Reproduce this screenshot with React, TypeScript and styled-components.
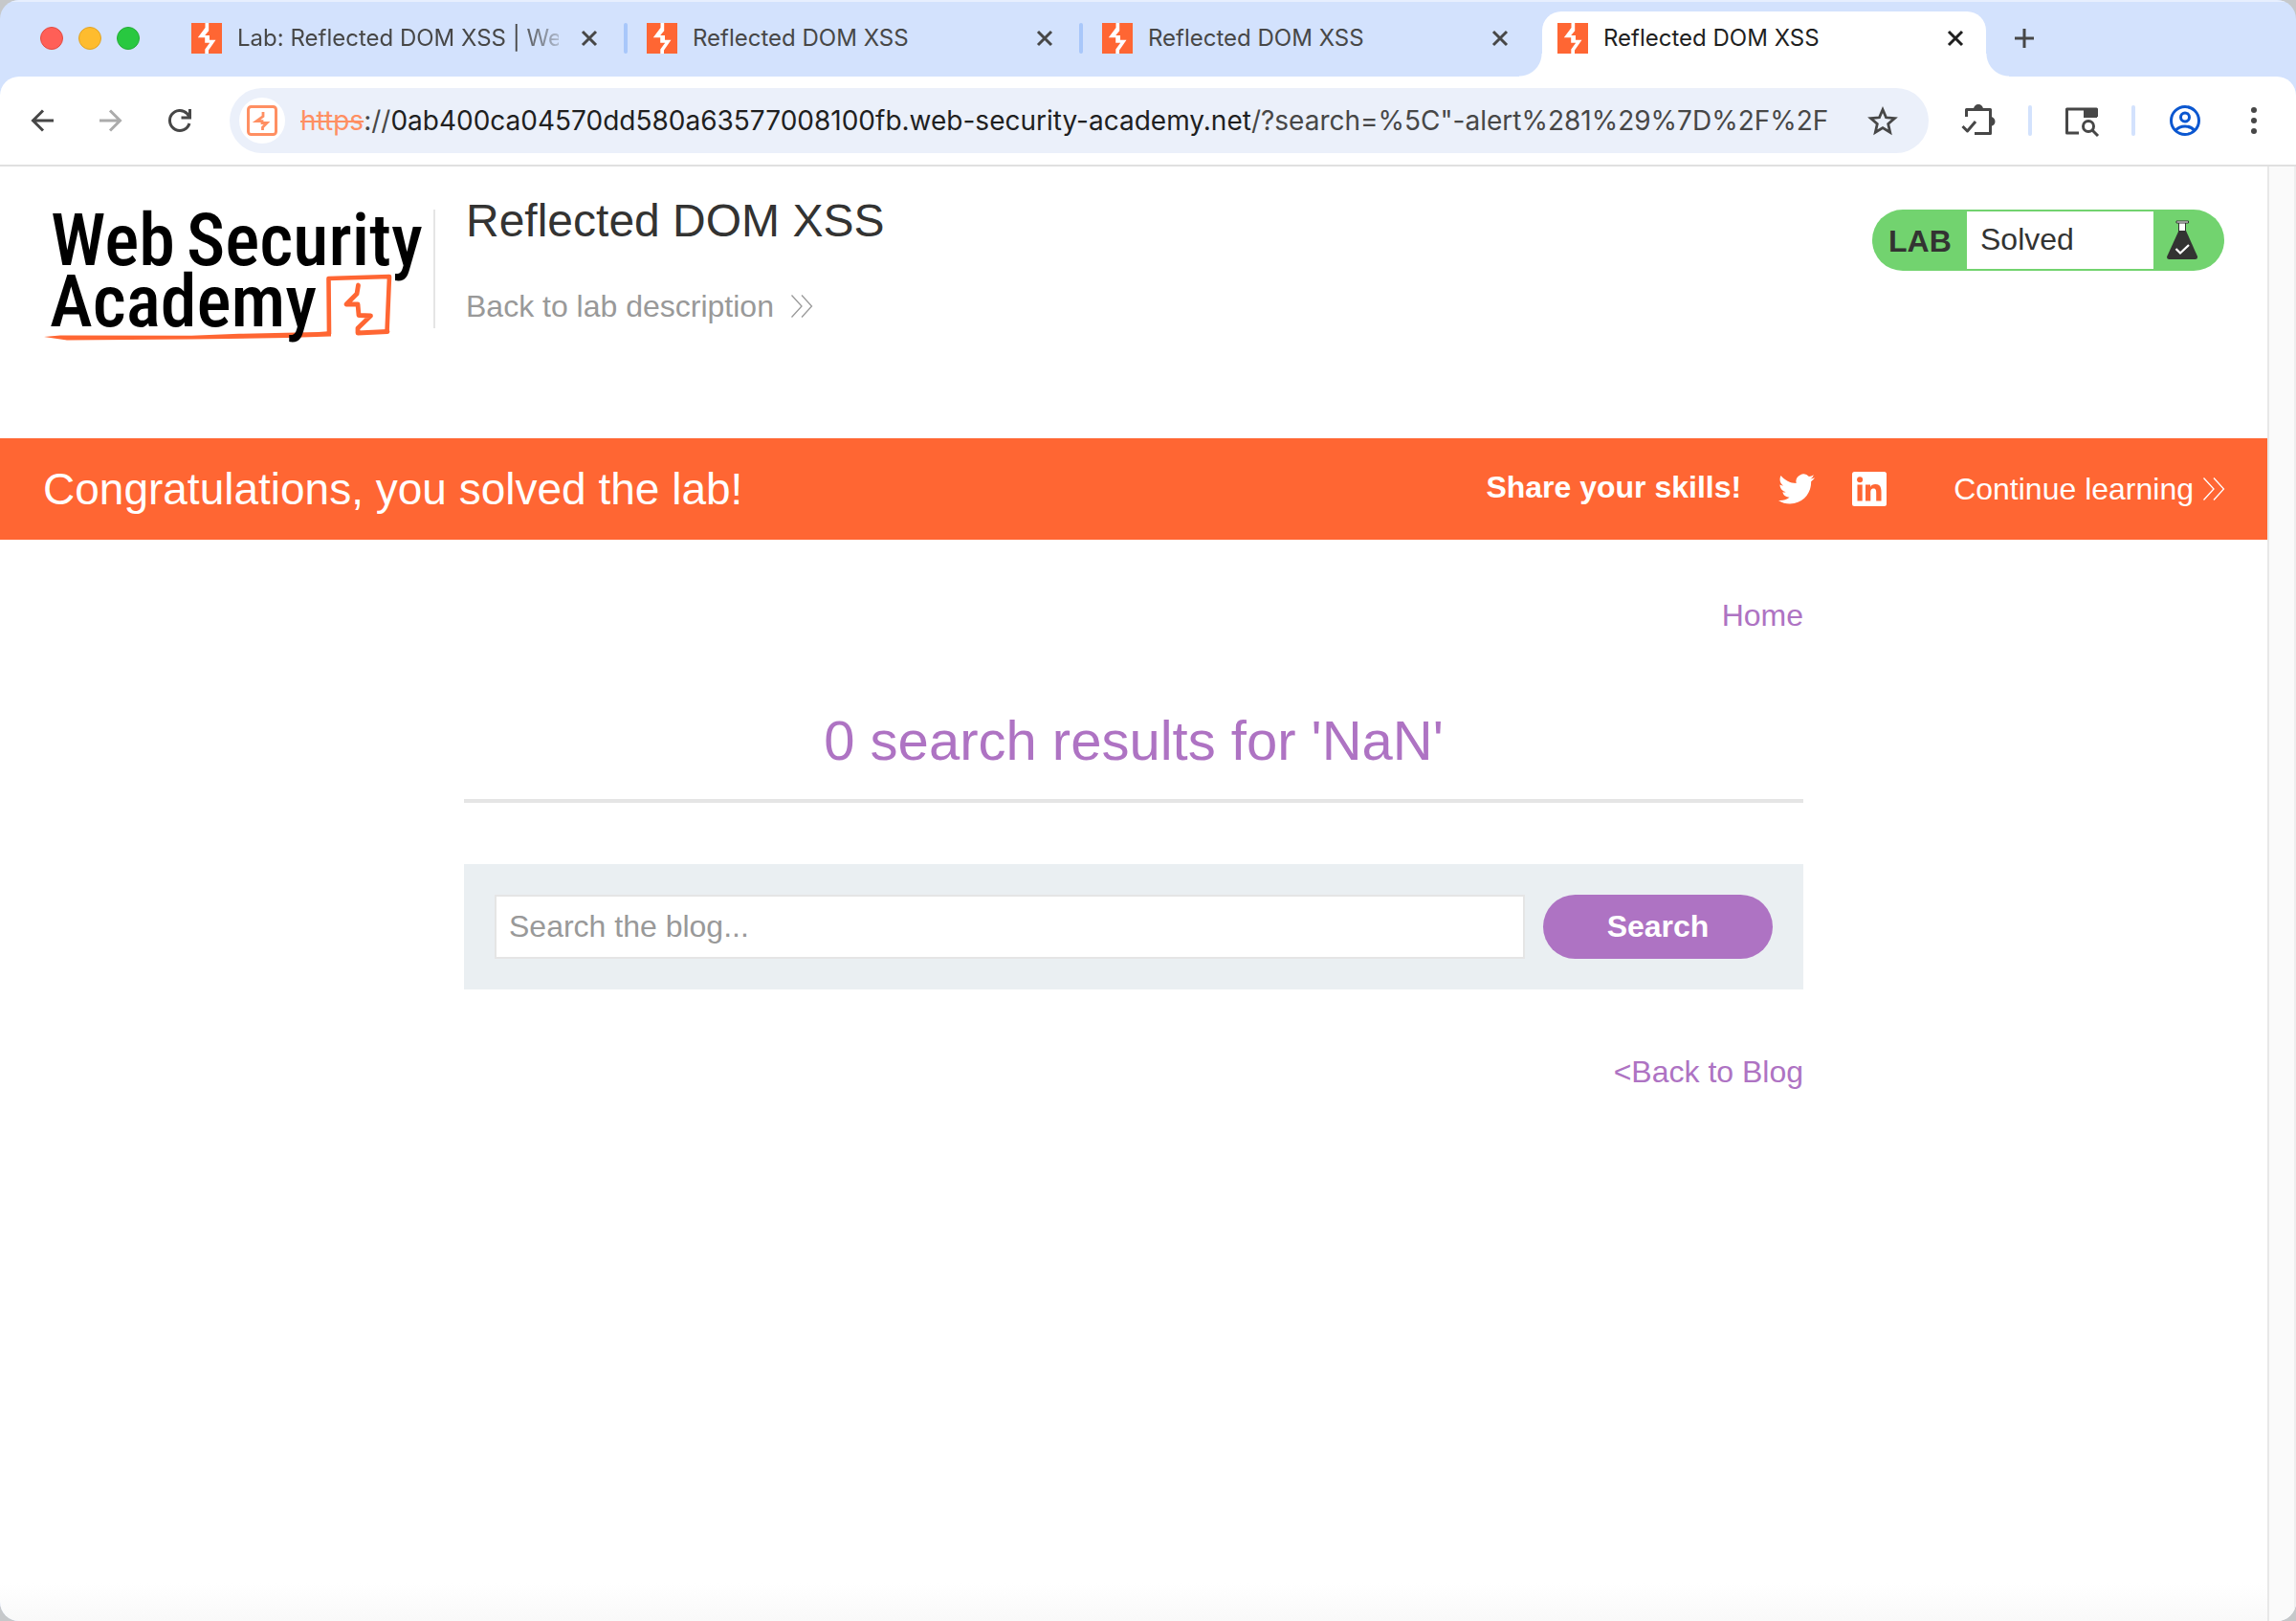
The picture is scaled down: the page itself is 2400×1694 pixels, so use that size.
import React from "react";
import styled, { createGlobalStyle } from "styled-components";

const Global = createGlobalStyle`
  *, *::before, *::after { box-sizing: border-box; }
  body { margin: 0; background: #c6c8ca; font-family: "Liberation Sans", Arial, sans-serif; color: #333332; }
  button { border: 0; padding: 0; background: none; font: inherit; color: inherit; cursor: pointer; }
  a { text-decoration: none; color: inherit; }
  h1, h2, p { margin: 0; font-weight: 400; }
  svg { display: block; overflow: visible; }
`;

const Window = styled.div`
  min-height: 100vh;
  display: flex;
  flex-direction: column;
  border-radius: 20px;
  overflow: hidden;
  background: #d3e2fd;
`;

const TabStrip = styled.div`
  display: flex;
  align-items: flex-end;
  height: 80px;
  padding-left: 42px;
  border-top: 2px solid #e7effe;
`;

const Lights = styled.div`
  display: flex;
  align-items: center;
  gap: 16px;
  height: 80px;
  margin-right: 38px;
`;

const Light = styled.button<{ $fill: string; $edge: string }>`
  width: 24px;
  height: 24px;
  border-radius: 50%;
  background: ${(p) => p.$fill};
  border: 1px solid ${(p) => p.$edge};
`;

const TabBox = styled.div<{ $active?: boolean }>`
  position: relative;
  display: flex;
  align-items: center;
  gap: 16px;
  width: 464px;
  height: 68px;
  padding: 0 16px 12px;
  border-radius: 20px 20px 0 0;
  background: ${(p) => (p.$active ? "#ffffff" : "transparent")};
  color: ${(p) => (p.$active ? "#1f1f1f" : "#474747")};
  &::before,
  &::after {
    content: "";
    display: ${(p) => (p.$active ? "block" : "none")};
    position: absolute;
    bottom: 0;
    width: 24px;
    height: 24px;
  }
  &::before {
    right: 100%;
    background: radial-gradient(circle at 0 0, transparent 23px, #ffffff 24px);
  }
  &::after {
    left: 100%;
    background: radial-gradient(circle at 100% 0, transparent 23px, #ffffff 24px);
  }
`;

const TabTitle = styled.span<{ $fade?: boolean }>`
  flex: 1;
  min-width: 0;
  overflow: hidden;
  white-space: nowrap;
  font-family: Inter, sans-serif;
  font-size: 24px;
  line-height: 32px;
  mask-image: ${(p) => (p.$fade ? "linear-gradient(to right, #000 88%, transparent 104%)" : "none")};
`;

const TabGap = styled.div<{ $line?: boolean }>`
  width: 12px;
  height: 68px;
  padding: 12px 4px 24px;
  &::before {
    content: "";
    display: block;
    height: 32px;
    border-radius: 2px;
    background: ${(p) => (p.$line ? "#a8c7fa" : "transparent")};
  }
`;

const CloseButton = styled.button`
  width: 32px;
  height: 32px;
  display: grid;
  place-items: center;
`;

const NewTab = styled.button`
  width: 48px;
  height: 56px;
  margin: 0 16px 12px;
  display: grid;
  place-items: center;
  color: #474747;
`;

const Toolbar = styled.div`
  display: flex;
  align-items: center;
  gap: 28px;
  height: 94px;
  padding: 0 20px;
  background: #ffffff;
  border-radius: 20px 20px 0 0;
  border-bottom: 2px solid #e0e0e0;
`;

const IconGroup = styled.div`
  display: flex;
  gap: 24px;
`;

const IconButton = styled.button<{ $tone?: string }>`
  width: 48px;
  height: 48px;
  display: grid;
  place-items: center;
  color: ${(p) => p.$tone ?? "#474747"};
`;

const AddressBar = styled.div`
  flex: 1;
  min-width: 0;
  display: flex;
  align-items: center;
  gap: 16px;
  height: 68px;
  padding: 0 24px 0 10px;
  border-radius: 34px;
  background: #ebf0fa;
`;

const SiteButton = styled.button`
  flex: none;
  width: 48px;
  height: 48px;
  border-radius: 50%;
  background: #ffffff;
  display: grid;
  place-items: center;
  color: #ff8f62;
`;

const Address = styled.div`
  flex: 1;
  min-width: 0;
  overflow: hidden;
  white-space: nowrap;
  font-family: Inter, sans-serif;
  font-size: 28px;
  line-height: 36px;
  color: #474747;
`;

const Scheme = styled.s`
  color: #ff8f62;
`;

const Host = styled.span`
  color: #1f1f1f;
`;

const ToolbarLine = styled.div`
  width: 4px;
  height: 32px;
  border-radius: 2px;
  background: #d3e2fd;
`;

const Viewport = styled.div`
  flex: 1;
  display: flex;
  background: linear-gradient(to top, #f9f9f9, #ffffff 40px);
`;

const Page = styled.main`
  flex: 1;
  min-width: 0;
`;

const ScrollTrack = styled.div`
  width: 30px;
  border-left: 2px solid #e8e8e8;
  border-right: 2px solid #eeeeee;
  background: #fafafa;
`;

const LabHeader = styled.header`
  display: flex;
  align-items: flex-start;
  padding: 29px 45px 98px 44px;
`;

const LogoLink = styled.a`
  margin-top: 12px;
`;

const HeaderRule = styled.div`
  width: 2px;
  height: 124px;
  margin: 16px 32px 0 7px;
  background: #e5e5e5;
`;

const TitleBlock = styled.div`
  flex: 1;
  display: flex;
  flex-direction: column;
  align-items: flex-start;
  gap: 43px;
`;

const LabTitle = styled.h2`
  font-size: 48px;
  line-height: 56px;
`;

const BackLink = styled.a`
  display: flex;
  align-items: center;
  gap: 18px;
  font-size: 32px;
  line-height: 36px;
  color: #999999;
`;

const Badge = styled.div`
  display: flex;
  height: 64px;
  margin-top: 16px;
  padding: 2px 0;
  border-radius: 32px;
  background: #72d36f;
  font-size: 32px;
  line-height: 36px;
`;

const BadgeLabel = styled.p`
  width: 99px;
  padding: 13px 0 0 17px;
  font-weight: 700;
`;

const BadgeStatus = styled.p`
  width: 195px;
  padding: 11px 0 0 14px;
  background: #ffffff;
`;

const BadgeIcon = styled.div`
  width: 74px;
  padding: 9px 0 0 14px;
`;

const Banner = styled.section`
  display: flex;
  align-items: center;
  height: 106px;
  padding: 0 45px;
  background: #ff6633;
  color: #ffffff;
  font-size: 32px;
  line-height: 36px;
`;

const BannerTitle = styled.h2`
  flex: 1;
  font-size: 46px;
  line-height: 56px;
`;

const ShareGroup = styled.div`
  display: flex;
  align-items: center;
  gap: 39px;
  margin-right: 70px;
`;

const ShareText = styled.strong`
  padding-bottom: 4px;
`;

const ContinueLink = styled.a`
  display: flex;
  align-items: center;
  gap: 10px;
`;

const Container = styled.div`
  max-width: 1400px;
  margin: 0 auto;
  padding-top: 61px;
  display: flex;
  flex-direction: column;
`;

const TextLink = styled.a`
  align-self: flex-end;
  font-size: 32px;
  line-height: 36px;
  color: #ae73c3;
`;

const ResultHeading = styled.h1`
  margin: 79px 0 64px;
  padding-bottom: 27px;
  border-bottom: 4px solid #e5e5e5;
  text-align: center;
  font-size: 58px;
  line-height: 68px;
  color: #ae73c3;
`;

const SearchForm = styled.form`
  display: flex;
  gap: 19px;
  margin-bottom: 68px;
  padding: 32px;
  background: #eaeff2;
`;

const SearchInput = styled.input`
  flex: 1;
  min-width: 0;
  height: 67px;
  padding: 0 13px;
  border: 2px solid #e5e5e5;
  border-radius: 0;
  background: #ffffff;
  font: 32px "Liberation Sans", Arial, sans-serif;
  color: #333332;
  outline: none;
  &::placeholder { color: #999999; opacity: 1; }
`;

const SearchButton = styled.button`
  width: 240px;
  height: 67px;
  border-radius: 34px;
  background: #ae73c3;
  color: #ffffff;
  font-size: 32px;
  font-weight: 700;
`;

const Favicon = () => (
  <svg width="32" height="32" viewBox="0 0 32 32" aria-hidden="true">
    <rect width="32" height="32" fill="#ff6633" />
    <path d="M14.500 0h3.700v8.300l-4 4.700h4.800v4.700h6.500L18 28.400V32h-3.700v-4.600l4.900-6.600h-5v-5.600H6.800L14.500 5z" fill="#fff" />
  </svg>
);

const CloseIcon = () => (
  <svg width="18" height="18" viewBox="0 0 18 18" aria-hidden="true">
    <path d="M2 2l14 14M16 2L2 16" stroke="currentColor" strokeWidth="3" />
  </svg>
);

const DoubleChevron = () => (
  <svg width="22" height="24" viewBox="0 0 22 24" aria-hidden="true">
    <path d="M.5 .5L11 12L.5 23.500M11 .5L21.500 12L11 23.500" fill="none" stroke="currentColor" strokeWidth="1.300" />
  </svg>
);

const Logo = () => (
  <svg width="402" height="145" viewBox="0 0 402 145" role="img" aria-label="Web Security Academy">
    <path d="M2 137L19 135.500L156 135.800L206 133.800L289 132L302 131V136.500L256 138L156 139.500L26 140.500z" fill="#ff6633" />
    <path d="M300 134L299.500 76L363 74L360.500 132" fill="none" stroke="#ff6633" strokeWidth="4.600" strokeLinejoin="round" />
    <path d="M330.500 83L329 92L318 103L330 103L331 114.500L343.500 115L330 128V133L361 131.500" fill="none" stroke="#ff6633" strokeWidth="4.800" strokeLinejoin="round" strokeLinecap="round" />
    <g fontFamily="'Roboto Condensed', Roboto, sans-serif" fontSize="76" fontWeight="500" fill="#000">
      <text x="9" y="62">Web</text>
      <text x="151" y="62">Security</text>
      <text x="8" y="126">Academy</text>
    </g>
  </svg>
);

const tabs = [
  { title: "Lab: Reflected DOM XSS | We", fade: true, line: true },
  { title: "Reflected DOM XSS", line: true },
  { title: "Reflected DOM XSS" },
  { title: "Reflected DOM XSS", active: true },
];

export default function App() {
  return (
    <>
      <Global />
      <Window>
        <TabStrip>
          <Lights>
            <Light $fill="#ff5f57" $edge="#e24b41" aria-label="Close window" />
            <Light $fill="#febc2e" $edge="#e1a325" aria-label="Minimize window" />
            <Light $fill="#28c840" $edge="#24ad36" aria-label="Zoom window" />
          </Lights>
          {tabs.map((t, i) => (
            <React.Fragment key={i}>
              <TabBox $active={t.active}>
                <Favicon />
                <TabTitle $fade={t.fade}>{t.title}</TabTitle>
                <CloseButton aria-label="Close tab"><CloseIcon /></CloseButton>
              </TabBox>
              {!t.active && <TabGap $line={t.line} />}
            </React.Fragment>
          ))}
          <NewTab aria-label="New tab">
            <svg width="20" height="20" viewBox="0 0 20 20" aria-hidden="true">
              <path d="M10 0v20M0 10h20" stroke="currentColor" strokeWidth="3" />
            </svg>
          </NewTab>
        </TabStrip>
        <Toolbar>
          <IconGroup>
            <IconButton aria-label="Back">
              <svg width="24" height="24" viewBox="0 0 24 24" fill="none" stroke="currentColor" strokeWidth="3" aria-hidden="true">
                <path d="M24 12H2M13 1.500L2.500 12L13 22.500" />
              </svg>
            </IconButton>
            <IconButton aria-label="Forward" $tone="#ababab">
              <svg width="24" height="24" viewBox="0 0 24 24" fill="none" stroke="currentColor" strokeWidth="3" aria-hidden="true">
                <path d="M0 12H22M11 1.500L21.500 12L11 22.500" />
              </svg>
            </IconButton>
            <IconButton aria-label="Reload">
              <svg width="24" height="24" viewBox="0 0 24 24" fill="none" stroke="currentColor" strokeWidth="3" aria-hidden="true">
                <path d="M22 15A10.500 10.500 0 1 1 19.500 4.600L22 8M22.500 0V9H13.500" />
              </svg>
            </IconButton>
          </IconGroup>
          <AddressBar>
            <SiteButton aria-label="Site information">
              <svg width="32" height="32" viewBox="0 0 32 32" fill="none" aria-hidden="true">
                <rect x="1.500" y="1.500" width="29" height="29" rx="3" stroke="currentColor" strokeWidth="3" />
                <path d="M17 7V11.500L10 16.700H16V18.500H21L16.500 23V26" stroke="currentColor" strokeWidth="2.800" />
              </svg>
            </SiteButton>
            <Address role="textbox" aria-label="Address and search bar" tabIndex={0}>
              <Scheme>https</Scheme>://<Host>0ab400ca04570dd580a63577008100fb.web-security-academy.net</Host>/?search=%5C"-alert%281%29%7D%2F%2F
            </Address>
            <IconButton aria-label="Bookmark this tab">
              <svg width="30" height="30" viewBox="0 0 30 30" fill="none" stroke="currentColor" strokeWidth="2.800" aria-hidden="true">
                <path d="M15 3.500l3.500 8.300 9 .8-6.800 5.900 2 8.800-7.700-4.700-7.700 4.700 2-8.800-6.800-5.900 9-.8z" />
              </svg>
            </IconButton>
          </AddressBar>
          <IconButton aria-label="Extensions">
            <svg width="36" height="36" viewBox="0 0 36 36" fill="none" stroke="currentColor" strokeWidth="3" strokeLinejoin="round" aria-hidden="true">
              <path d="M5.500 14V6.500H30.500V31.500H14M1.500 24l5 5L15 19" />
              <path d="M13 6a5 5 0 0 1 10 0zM30.500 14a5 5 0 0 1 0 10z" fill="currentColor" stroke="none" />
            </svg>
          </IconButton>
          <ToolbarLine />
          <IconButton aria-label="Side panel search">
            <svg width="36" height="36" viewBox="0 0 36 36" fill="none" stroke="currentColor" strokeWidth="3" strokeLinejoin="round" aria-hidden="true">
              <path d="M15 31H2.500V6H33.500V14" />
              <path d="M20 5h14v10H20z" fill="currentColor" stroke="none" />
              <circle cx="25" cy="24" r="5.500" />
              <path d="M29 28l6 6" />
            </svg>
          </IconButton>
          <ToolbarLine />
          <IconGroup>
            <IconButton aria-label="Profile" $tone="#0b57d0">
              <svg width="32" height="32" viewBox="0 0 32 32" fill="none" stroke="currentColor" strokeWidth="3" aria-hidden="true">
                <circle cx="16" cy="16" r="14.500" />
                <circle cx="16" cy="12.500" r="4.500" />
                <path d="M6 26.500c5-6 15-6 20 0" />
              </svg>
            </IconButton>
            <IconButton aria-label="Menu">
              <svg width="8" height="28" viewBox="0 0 8 28" fill="currentColor" aria-hidden="true">
                <circle cx="4" cy="3" r="3" />
                <circle cx="4" cy="14" r="3" />
                <circle cx="4" cy="25" r="3" />
              </svg>
            </IconButton>
          </IconGroup>
        </Toolbar>
        <Viewport>
          <Page>
            <LabHeader>
              <LogoLink href="#academy"><Logo /></LogoLink>
              <HeaderRule />
              <TitleBlock>
                <LabTitle>Reflected DOM XSS</LabTitle>
                <BackLink href="#description">Back to lab description<DoubleChevron /></BackLink>
              </TitleBlock>
              <Badge>
                <BadgeLabel>LAB</BadgeLabel>
                <BadgeStatus>Solved</BadgeStatus>
                <BadgeIcon>
                  <svg width="32" height="42" viewBox="0 0 32 42" aria-hidden="true">
                    <path d="M12.500 2.500h7V12h-7z" fill="#fff" stroke="#333332" strokeWidth="1" />
                    <path d="M10 1h12.500v2H10z" fill="#fff" stroke="#333332" strokeWidth="1" />
                    <path d="M12.500 11h7.500L32 38q.5 3-2.500 3h-27Q-.5 41 .2 38z" fill="#333332" />
                    <path d="M9.500 30l4.500 4.500L23 26" fill="none" stroke="#fff" strokeWidth="2.200" />
                  </svg>
                </BadgeIcon>
              </Badge>
            </LabHeader>
            <Banner>
              <BannerTitle>Congratulations, you solved the lab!</BannerTitle>
              <ShareGroup>
                <ShareText>Share your skills!</ShareText>
                <a href="#twitter" aria-label="Twitter">
                  <svg width="38" height="38" viewBox="0 0 24 24" fill="#fff" aria-hidden="true">
                    <path d="M23.953 4.570a10 10 0 01-2.825.775 4.958 4.958 0 002.163-2.723c-.951.555-2.005.959-3.127 1.184a4.920 4.920 0 00-8.384 4.482C7.690 8.095 4.067 6.130 1.640 3.162a4.822 4.822 0 00-.666 2.475c0 1.710.870 3.213 2.188 4.096a4.904 4.904 0 01-2.228-.616v.060a4.923 4.923 0 003.946 4.827 4.996 4.996 0 01-2.212.085 4.936 4.936 0 004.604 3.417 9.867 9.867 0 01-6.102 2.105c-.390 0-.779-.023-1.170-.067a13.995 13.995 0 007.557 2.209c9.053 0 13.998-7.496 13.998-13.985 0-.210 0-.420-.015-.630A9.935 9.935 0 0024 4.590z" />
                  </svg>
                </a>
                <a href="#linkedin" aria-label="LinkedIn">
                  <svg width="36" height="36" viewBox="0 0 36 36" aria-hidden="true">
                    <rect width="36" height="36" rx="2.500" fill="#fff" />
                    <path d="M5.500 13.500h5.200v17H5.500zM14 13.500h5v2.400c1-1.800 2.800-2.800 5.200-2.800 5.200 0 6.300 3.400 6.300 8v9.400h-5.300v-8.300c0-2.200 0-4.600-2.800-4.600s-3.100 2.200-3.100 4.400v8.500H14z" fill="#ff6633" />
                    <circle cx="8.100" cy="8.200" r="3" fill="#ff6633" />
                  </svg>
                </a>
              </ShareGroup>
              <ContinueLink href="#next">Continue learning<DoubleChevron /></ContinueLink>
            </Banner>
            <Container>
              <TextLink href="#home">Home</TextLink>
              <ResultHeading>0 search results for 'NaN'</ResultHeading>
              <SearchForm onSubmit={(e) => e.preventDefault()}>
                <SearchInput type="text" aria-label="Search the blog" placeholder="Search the blog..." />
                <SearchButton type="submit">Search</SearchButton>
              </SearchForm>
              <TextLink href="#blog">&lt;Back to Blog</TextLink>
            </Container>
          </Page>
          <ScrollTrack />
        </Viewport>
      </Window>
    </>
  );
}
